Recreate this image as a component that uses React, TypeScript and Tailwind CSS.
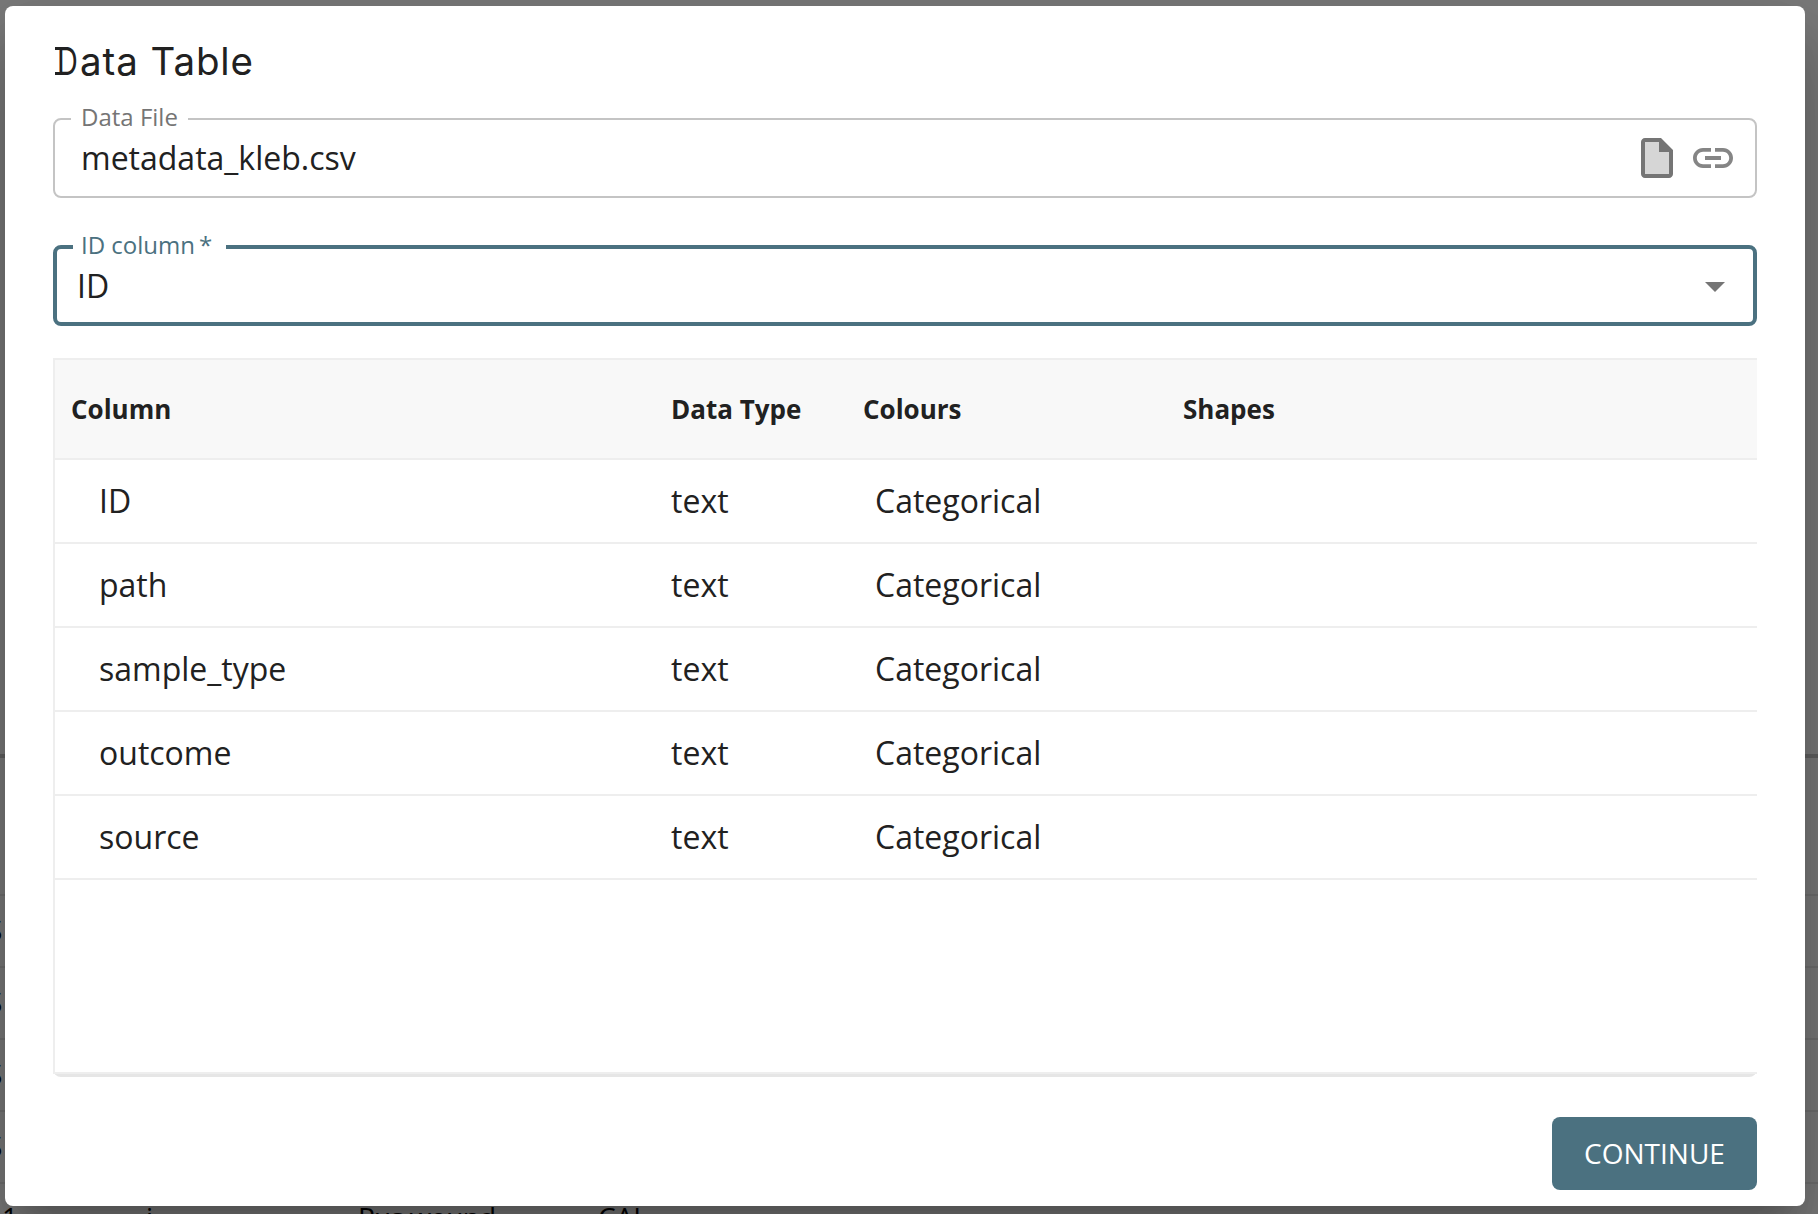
import React from "react";

const rows = ["ID", "path", "sample_type", "outcome", "source"];

const columns = "grid grid-cols-[600px_192px_320px_1fr] items-center";

function FileIcon() {
  return (
    <svg className="block h-12 w-12" viewBox="0 0 24 24">
      <path d="M5 3h8l5 5v13H5z" fill="#d6d6d6" />
      <path
        fill="#757575"
        d="M14 2H6c-1.100 0-2 .9-2 2v16c0 1.100.9 2 2 2h12c1.100 0 2-.9 2-2V8l-6-6zm4 18H6V4h7v5h5v11z"
      />
    </svg>
  );
}

function LinkIcon() {
  return (
    <svg className="block h-12 w-12" viewBox="0 0 24 24">
      <path
        fill="#858585"
        d="M3.900 12c0-1.710 1.390-3.100 3.100-3.100h4V7H7c-2.760 0-5 2.240-5 5s2.240 5 5 5h4v-1.900H7c-1.710 0-3.100-1.390-3.100-3.100zM8 13h8v-2H8v2zm9-6h-4v1.900h4c1.710 0 3.100 1.390 3.100 3.100s-1.390 3.100-3.100 3.100h-4V17h4c2.760 0 5-2.240 5-5s-2.240-5-5-5z"
      />
    </svg>
  );
}

function Backdrop() {
  return (
    <div className="absolute inset-0 overflow-hidden bg-[#7b7b7b] text-[28px] leading-none text-black">
      <div className="absolute left-0 top-[754px] h-1 w-full bg-[#616161]" />
      {[894, 966, 1038, 1110, 1182].map((y) => (
        <div key={y} className="absolute left-0 h-0.5 w-full bg-[#707070]" style={{ top: y }} />
      ))}
      {[915, 987, 1059, 1131].map((y) => (
        <span key={y} className="absolute -left-[14px] text-[30px] opacity-99" style={{ top: y }}>
          S
        </span>
      ))}
      <span className="absolute -left-[14px] top-[1203px]">51</span>
      <span className="absolute left-[146px] top-[1203px]">i</span>
      <span className="absolute left-[358px] top-[1203px] tracking-[-0.8px]">Pus wound</span>
      <span className="absolute left-[598px] top-[1203px]">CAI</span>
    </div>
  );
}

export default function App() {
  return (
    <div className="relative h-[1214px] w-[1818px] overflow-hidden font-['Open_Sans',sans-serif] text-[#212121]">
      <Backdrop />
      <main className="relative ml-[5px] mt-[6px] flex h-[1200px] w-[1800px] flex-col rounded-lg bg-white px-12 shadow-[0_22px_30px_-14px_rgba(0,0,0,0.2),0_48px_76px_6px_rgba(0,0,0,0.14),0_18px_92px_16px_rgba(0,0,0,0.12)]">
        <h1 className="relative mt-[31px] h-12 font-['Inter',sans-serif] text-[38.5px] leading-[48px] tracking-[0.9px]">
          <span className="ml-1 inline-block w-[23px] origin-left scale-x-75">D</span>ata Table
          <span className="absolute left-[2px] top-[10px] h-[3px] w-[8px] bg-[#212121]" />
          <span className="absolute left-[2px] top-[35px] h-[3px] w-[8px] bg-[#212121]" />
        </h1>

        <div className="relative mt-[33px] flex h-20 shrink-0 items-center rounded-lg border-2 border-[#c4c4c4] pl-[26px] pr-[18px]">
          <span className="absolute -top-[19px] left-4 bg-white px-[10px] text-[24px] leading-[32px] text-[#757575]">
            Data File
          </span>
          <span className="flex-1 text-[32px]">metadata_kleb.csv</span>
          <FileIcon />
          <span className="ml-2">
            <LinkIcon />
          </span>
        </div>

        <div className="relative mt-[47px] flex h-[81px] shrink-0 items-center rounded-lg border-4 border-[#4b7180] pl-5 pr-[14px]">
          <span className="absolute -top-[20px] left-4 w-[153px] bg-white pl-2 text-[24px] leading-[32px] text-[#4b7180]">
            ID column<span className="ml-1">*</span>
          </span>
          <span className="flex-1 pt-px text-[32px]">ID</span>
          <svg className="block h-12 w-12" viewBox="0 0 24 24">
            <path d="M7 10l5 5 5-5z" fill="#757575" />
          </svg>
        </div>

        <section className="mt-8 h-[719px] shrink-0 rounded-b-lg bg-[#e6e6e6]">
          <div className="h-[716px] border-2 border-r-0 border-[#eee] bg-white">
            <div className={columns + " h-[100px] border-b-2 border-[#eee] bg-[#f8f8f8] pl-4 text-[26px] font-bold"}>
              <span>Column</span>
              <span>Data Type</span>
              <span>Colours</span>
              <span>Shapes</span>
            </div>
            {rows.map((name) => (
              <div key={name} className={columns + " h-[84px] border-b-2 border-[#eee] pl-4 text-[32px]"}>
                <span className="pl-7">{name}</span>
                <span>text</span>
                <span className="pl-3">Categorical</span>
              </div>
            ))}
          </div>
        </section>

        <button className="mt-10 h-[73px] w-[205px] shrink-0 self-end rounded-lg bg-[#4b7180] pb-[2px] text-[28px] text-white">
          CONTINUE
        </button>
      </main>
    </div>
  );
}
